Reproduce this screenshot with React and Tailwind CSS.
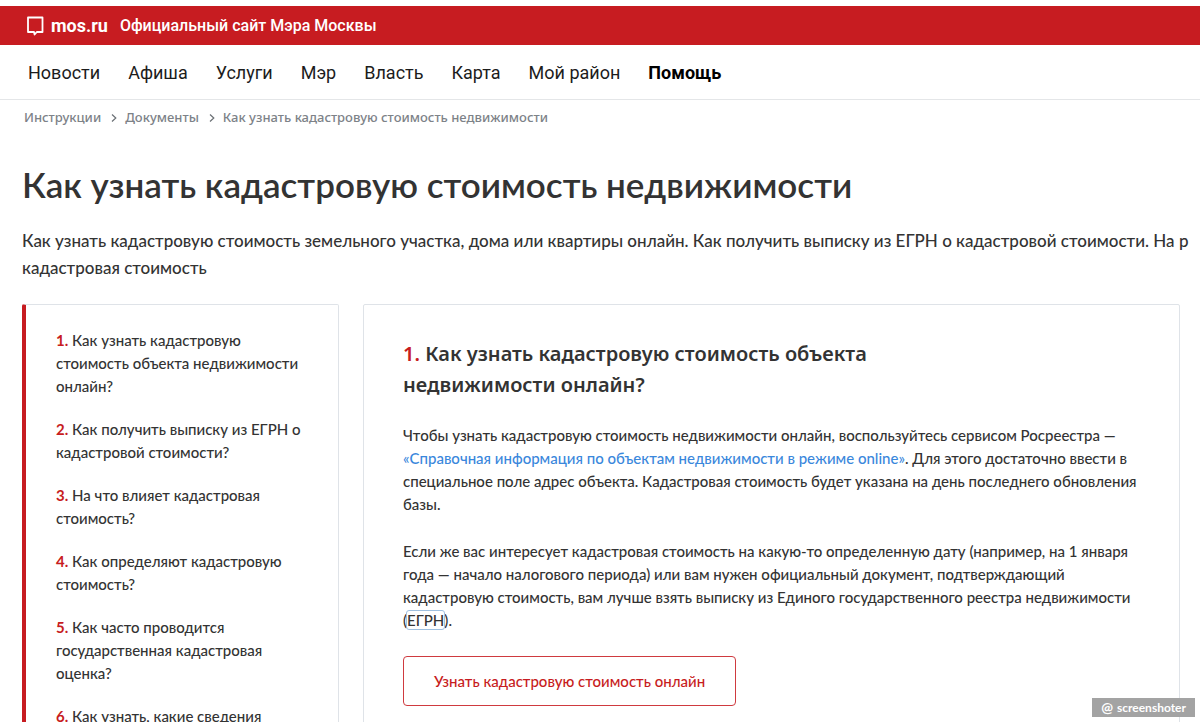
import React from "react"

const navItems = ["Новости", "Афиша", "Услуги", "Мэр", "Власть", "Карта", "Мой район"]

const contents = [
    "Как узнать кадастровую стоимость объекта недвижимости онлайн?",
    "Как получить выписку из ЕГРН о кадастровой стоимости?",
    "На что влияет кадастровая стоимость?",
    "Как определяют кадастровую стоимость?",
    "Как часто проводится государственная кадастровая оценка?",
    "Как узнать, какие сведения",
]

const Logo = () => (
    <svg width="18" height="20" viewBox="0 0 18 20" fill="none" stroke="white" strokeWidth="1.8" strokeLinejoin="round" aria-hidden="true">
        <path d="M2 1.5H16.5V16H10.8L8.6 18.5L8 16H2Z" />
    </svg>
)

const Chevron = () => (
    <svg width="6" height="8" viewBox="0 0 6 8" fill="none" stroke="#6b7075" strokeWidth="1.2" aria-hidden="true">
        <path d="M1 0.5L4.8 4L1 7.5" />
    </svg>
)

const Header = () => (
    <header className="font-[Roboto,sans-serif]">
        <div className="mt-1.5 flex h-[39px] items-center bg-[#c71c21] pl-[26px] text-white">
            <a href="#" className="flex items-center gap-[7px]">
                <Logo />
                <span className="text-lg font-bold">mos.ru</span>
            </a>
            <span className="ml-3 text-base font-medium">Официальный сайт Мэра Москвы</span>
        </div>
        <nav className="flex h-[55px] items-center gap-7 border-b border-[#e4e6e8] pt-px pl-7 text-lg font-normal text-[#1c1c1c]">
            {navItems.map((item) => (
                <a key={item} href="#">{item}</a>
            ))}
            <a href="#" className="font-bold text-black">Помощь</a>
        </nav>
    </header>
)

const Breadcrumbs = () => (
    <nav className="flex h-9 items-center pl-6 font-['Noto_Sans',sans-serif] text-[13px] font-medium text-[#7d8288]">
        <a href="#">Инструкции</a>
        <span className="mr-2 ml-2.5"><Chevron /></span>
        <a href="#">Документы</a>
        <span className="mr-2 ml-2.5"><Chevron /></span>
        <span>Как узнать кадастровую стоимость недвижимости</span>
    </nav>
)

const Sidebar = () => (
    <aside className="w-[317px] shrink-0 rounded-xs border border-l-4 border-[#dfe3e8] border-l-[#c71c21] pt-6 pr-6 pl-[30px] leading-[23px]">
        <ol className="flex flex-col gap-5">
            {contents.map((title, i) => (
                <li key={title}>
                    <a href="#"><span className="font-bold text-[#c71c21]">{i + 1}.</span> {title}</a>
                </li>
            ))}
        </ol>
    </aside>
)

const Article = () => (
    <article className="min-w-0 flex-1 rounded-xs border border-[#dfe3e8] pt-[33px] pr-5 pl-[39px] leading-[23px]">
        <h2 className="max-w-[520px] font-['Noto_Sans',sans-serif] text-xl leading-[31px] font-semibold">
            <span className="text-[#c71c21]">1.</span> Как узнать кадастровую стоимость объекта недвижимости онлайн?
        </h2>
        <p className="mt-6">
            Чтобы узнать кадастровую стоимость недвижимости онлайн, воспользуйтесь сервисом Росреестра —<br />
            <a href="#" className="text-[#3a87dc]">«Справочная информация по объектам недвижимости в режиме online»</a>. Для этого достаточно ввести в<br />
            специальное поле адрес объекта. Кадастровая стоимость будет указана на день последнего обновления<br />
            базы.
        </p>
        <p className="mt-6">
            Если же вас интересует кадастровая стоимость на какую-то определенную дату (например, на 1 января<br />
            года — начало налогового периода) или вам нужен официальный документ, подтверждающий<br />
            кадастровую стоимость, вам лучше взять выписку из Единого государственного реестра недвижимости<br />
            (<span className="rounded-xs outline outline-[#9fc0e0]">ЕГРН</span>).
        </p>
        <button className="mt-6 h-[50px] rounded border border-[#cf3a3f] px-[30px] text-[#c71c21]">
            Узнать кадастровую стоимость онлайн
        </button>
    </article>
)

export default function App() {
    return (
        <div className="h-screen overflow-hidden bg-white font-[Lato,sans-serif] text-[15px] font-medium text-[#333]">
            <Header />
            <Breadcrumbs />
            <main className="pr-5 pl-[22px]">
                <h1 className="mt-[22px] text-[35px] leading-[52px] font-semibold">Как узнать кадастровую стоимость недвижимости</h1>
                <p className="mt-[17px] text-[17px] leading-[27px] whitespace-nowrap">
                    Как узнать кадастровую стоимость земельного участка, дома или квартиры онлайн. Как получить выписку из ЕГРН о кадастровой стоимости. На р<br />
                    кадастровая стоимость
                </p>
                <div className="mt-[23px] flex gap-6">
                    <Sidebar />
                    <Article />
                </div>
            </main>
            <div className="fixed right-[5px] bottom-[5px] flex h-[19px] items-center gap-1 bg-[#a3a3a3] px-[9px] text-xs font-bold text-white">
                <span className="text-sm">@</span>screenshoter
            </div>
        </div>
    )
}
